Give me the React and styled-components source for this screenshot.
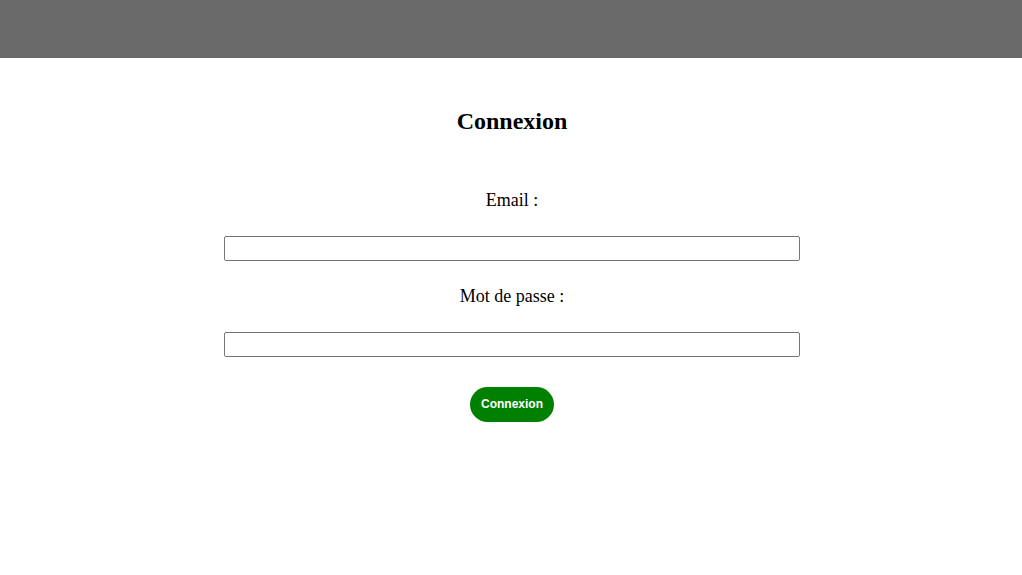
import React from "react";
import styled, { createGlobalStyle } from "styled-components";

const GlobalStyle = createGlobalStyle`
  html, body { margin: 0; padding: 0; background: #ffffff; }
  body { font-family: "Liberation Serif", "Times New Roman", serif; color: #000; }
`;

const Header = styled.header`
  height: 58px;
  background: #696969;
  width: 100%;
`;

const Main = styled.main`
  display: flex;
  flex-direction: column;
  align-items: center;
  padding: 50px 0 0 2px;
`;

const Title = styled.h2`
  margin: 0;
  font-size: 24px;
  font-weight: bold;
  line-height: 27px;
`;

const Form = styled.form`
  display: flex;
  flex-direction: column;
  align-items: center;
  width: 576px;
  margin-top: 55px;
`;

const Label = styled.label`
  font-size: 18px;
  line-height: 20px;
  margin-top: ${(p) => (p.$first ? "0" : "25px")};
  margin-bottom: 26px;
`;

const Input = styled.input`
  box-sizing: border-box;
  width: 576px;
  height: 25px;
  border: 1px solid #767676;
  border-radius: 2px;
  padding: 1px 2px;
  font-size: 13px;
  outline: none;
`;

const Button = styled.button`
  margin-top: 30px;
  background: #008000;
  color: #ffffff;
  border: none;
  border-radius: 18px;
  padding: 10px 11px;
  font-family: "Liberation Sans", Arial, sans-serif;
  font-weight: bold;
  font-size: 12px;
  line-height: 15px;
  cursor: pointer;
`;

export default function App() {
  return (
    <>
      <GlobalStyle />
      <Header />
      <Main>
        <Title>Connexion</Title>
        <Form onSubmit={(e) => e.preventDefault()}>
          <Label $first htmlFor="email">Email :</Label>
          <Input id="email" type="email" />
          <Label htmlFor="password">Mot de passe :</Label>
          <Input id="password" type="password" />
          <Button type="submit">Connexion</Button>
        </Form>
      </Main>
    </>
  );
}
